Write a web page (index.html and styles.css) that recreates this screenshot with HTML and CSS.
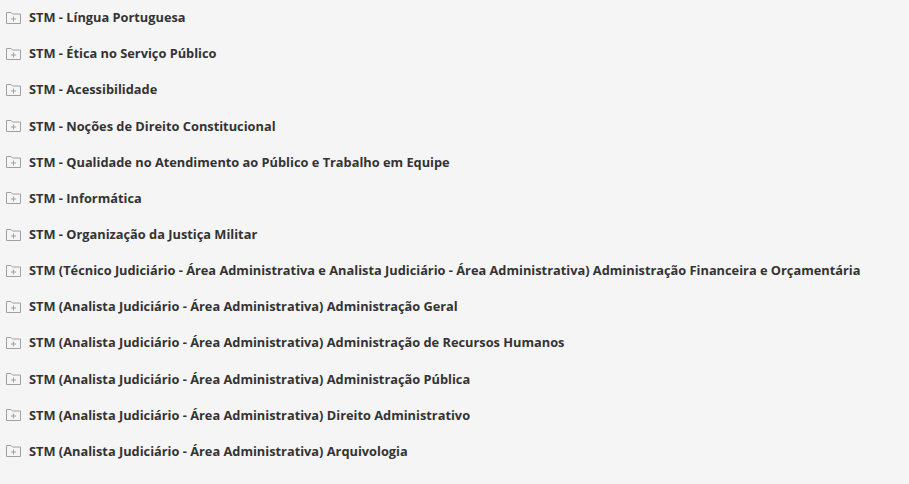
FILE: index.html
```html
<!DOCTYPE html>
<html lang="pt-BR">
<head>
  <meta charset="UTF-8" />
  <title>Disciplinas STM</title>
  <link rel="stylesheet" href="styles.css">
</head>
<body>

  <ul class="tree">
    <li class="node"><svg class="folder" viewBox="0 0 15 13"><path d="M0.5 1.5h4.5l1.5 1.5h8v9.5h-14z" /><path d="M7.5 5.5v5M5 8h5" /></svg><span>STM - Língua Portuguesa</span></li>
    <li class="node"><svg class="folder" viewBox="0 0 15 13"><path d="M0.5 1.5h4.5l1.5 1.5h8v9.5h-14z" /><path d="M7.5 5.5v5M5 8h5" /></svg><span>STM - Ética no Serviço Público</span></li>
    <li class="node"><svg class="folder" viewBox="0 0 15 13"><path d="M0.5 1.5h4.5l1.5 1.5h8v9.5h-14z" /><path d="M7.5 5.5v5M5 8h5" /></svg><span>STM - Acessibilidade</span></li>
    <li class="node"><svg class="folder" viewBox="0 0 15 13"><path d="M0.5 1.5h4.5l1.5 1.5h8v9.5h-14z" /><path d="M7.5 5.5v5M5 8h5" /></svg><span>STM - Noções de Direito Constitucional</span></li>
    <li class="node"><svg class="folder" viewBox="0 0 15 13"><path d="M0.5 1.5h4.5l1.5 1.5h8v9.5h-14z" /><path d="M7.5 5.5v5M5 8h5" /></svg><span>STM - Qualidade no Atendimento ao Público e Trabalho em Equipe</span></li>
    <li class="node"><svg class="folder" viewBox="0 0 15 13"><path d="M0.5 1.5h4.5l1.5 1.5h8v9.5h-14z" /><path d="M7.5 5.5v5M5 8h5" /></svg><span>STM - Informática</span></li>
    <li class="node"><svg class="folder" viewBox="0 0 15 13"><path d="M0.5 1.5h4.5l1.5 1.5h8v9.5h-14z" /><path d="M7.5 5.5v5M5 8h5" /></svg><span>STM - Organização da Justiça Militar</span></li>
    <li class="node"><svg class="folder" viewBox="0 0 15 13"><path d="M0.5 1.5h4.5l1.5 1.5h8v9.5h-14z" /><path d="M7.5 5.5v5M5 8h5" /></svg><span>STM (Técnico Judiciário - Área Administrativa e Analista Judiciário - Área Administrativa) Administração Financeira e Orçamentária</span></li>
    <li class="node"><svg class="folder" viewBox="0 0 15 13"><path d="M0.5 1.5h4.5l1.5 1.5h8v9.5h-14z" /><path d="M7.5 5.5v5M5 8h5" /></svg><span>STM (Analista Judiciário - Área Administrativa) Administração Geral</span></li>
    <li class="node"><svg class="folder" viewBox="0 0 15 13"><path d="M0.5 1.5h4.5l1.5 1.5h8v9.5h-14z" /><path d="M7.5 5.5v5M5 8h5" /></svg><span>STM (Analista Judiciário - Área Administrativa) Administração de Recursos Humanos</span></li>
    <li class="node"><svg class="folder" viewBox="0 0 15 13"><path d="M0.5 1.5h4.5l1.5 1.5h8v9.5h-14z" /><path d="M7.5 5.5v5M5 8h5" /></svg><span>STM (Analista Judiciário - Área Administrativa) Administração Pública</span></li>
    <li class="node"><svg class="folder" viewBox="0 0 15 13"><path d="M0.5 1.5h4.5l1.5 1.5h8v9.5h-14z" /><path d="M7.5 5.5v5M5 8h5" /></svg><span>STM (Analista Judiciário - Área Administrativa) Direito Administrativo</span></li>
    <li class="node"><svg class="folder" viewBox="0 0 15 13"><path d="M0.5 1.5h4.5l1.5 1.5h8v9.5h-14z" /><path d="M7.5 5.5v5M5 8h5" /></svg><span>STM (Analista Judiciário - Área Administrativa) Arquivologia</span></li>
  </ul>

</body>
</html>
```

FILE: styles.css
```css
* {
  box-sizing: border-box;
}

body {
  margin: 0;
  padding: 0;
  background-color: #f5f5f5;
  color: #333;
  font-family: 'Open Sans', sans-serif;
}

.tree {
  list-style: none;
  margin: 0;
  padding: 0 0 0 6px;
}

.node {
  display: flex;
  align-items: center;
  gap: 8px;
  height: 36.17px;
  padding-bottom: 2px;
  font-size: 12.8px;
  font-weight: 700;
}

.folder {
  width: 15px;
  height: 13px;
  flex: none;
  fill: none;
  stroke: #a0a0a0;
  stroke-width: 1;
}
```
